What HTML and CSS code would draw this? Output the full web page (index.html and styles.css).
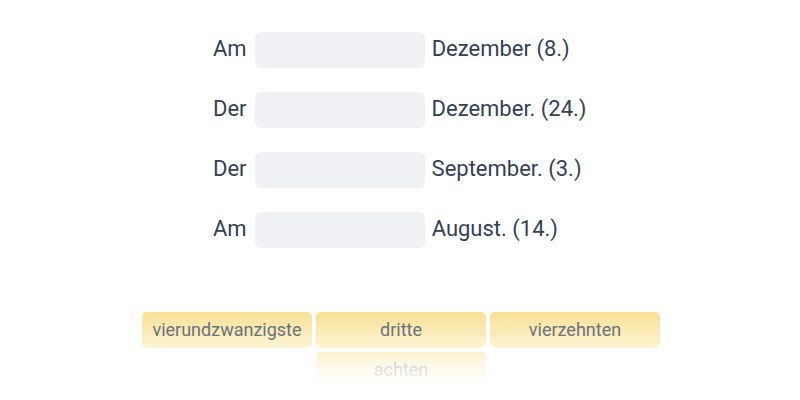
FILE: index.html
```html
<!DOCTYPE html>
<html lang="de">
<head>
  <meta charset="UTF-8" />
  <meta name="viewport" content="width=device-width, initial-scale=1.0" />
  <title>Datum ergänzen</title>
  <link rel="stylesheet" href="styles.css">
</head>
<body>
  <div class="sentences">
    <div class="row">
      <span class="word">Am</span>
      <div class="gap-slot"></div>
      <span class="word">Dezember (8.)</span>
    </div>
    <div class="row">
      <span class="word">Der</span>
      <div class="gap-slot"></div>
      <span class="word">Dezember. (24.)</span>
    </div>
    <div class="row">
      <span class="word">Der</span>
      <div class="gap-slot"></div>
      <span class="word">September. (3.)</span>
    </div>
    <div class="row">
      <span class="word">Am</span>
      <div class="gap-slot"></div>
      <span class="word">August. (14.)</span>
    </div>
  </div>

  <div class="pool">
    <div class="chip">vierundzwanzigste</div>
    <div class="chip">dritte</div>
    <div class="chip">vierzehnten</div>
    <div class="chip">achten</div>
  </div>
</body>
</html>
```

FILE: styles.css
```css
body {
  margin: 0;
  background-color: #fff;
  color: #334155;
  font-family: Roboto, "Noto Sans", sans-serif;
}
.sentences {
  width: 374px;
  margin: 0 auto;
  padding-top: 32px;
  display: flex;
  flex-direction: column;
  gap: 24px;
}
.row {
  display: flex;
  align-items: center;
  gap: 8px;
  height: 36px;
  white-space: nowrap;
}
.word {
  font-size: 22px;
  line-height: 1;
  margin-top: -3px;
}
.gap-slot {
  flex: none;
  width: 170px;
  height: 36px;
  border-radius: 6px;
  background-color: #eff1f5;
}
.gap-slot + .word {
  margin-left: -1px;
}
.pool {
  position: relative;
  width: 518px;
  height: 88px;
  margin: 64px auto 0;
  padding-left: 2px;
  display: flex;
  flex-wrap: wrap;
  justify-content: center;
  align-content: flex-start;
  gap: 4px;
  overflow: hidden;
}
.pool::after {
  content: "";
  position: absolute;
  left: 0;
  right: 0;
  bottom: 0;
  height: 50px;
  background: linear-gradient(to bottom, rgba(255, 255, 255, 0.5), #fff 75%);
}
.chip {
  width: 170px;
  height: 36px;
  border-radius: 5px;
  background: linear-gradient(to bottom, #f8e196, #fdf4d3);
  color: #6b7280;
  font-size: 18px;
  display: flex;
  align-items: center;
  justify-content: center;
  padding-bottom: 2px;
  box-sizing: border-box;
}
```
